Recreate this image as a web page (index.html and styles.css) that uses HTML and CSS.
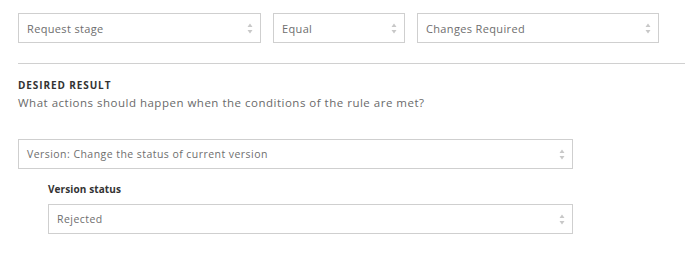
FILE: index.html
```html
<!DOCTYPE html>
<html>
<head>
<meta charset="utf-8">
<link rel="stylesheet" href="styles.css">
</head>
<body>
<div class="page">
  <div class="cond-row">
    <div class="select w1"><span>Request stage</span><svg class="arrows" viewBox="0 0 6 11"><path d="M3 0.5 L5.5 4 L0.5 4 Z M3 10.5 L5.5 7 L0.5 7 Z"/></svg></div>
    <div class="select w2"><span>Equal</span><svg class="arrows" viewBox="0 0 6 11"><path d="M3 0.5 L5.5 4 L0.5 4 Z M3 10.5 L5.5 7 L0.5 7 Z"/></svg></div>
    <div class="select w3"><span>Changes Required</span><svg class="arrows" viewBox="0 0 6 11"><path d="M3 0.5 L5.5 4 L0.5 4 Z M3 10.5 L5.5 7 L0.5 7 Z"/></svg></div>
  </div>
  <hr class="divider">
  <div class="section">
    <h3 class="section-title">DESIRED RESULT</h3>
    <p class="section-desc">What actions should happen when the conditions of the rule are met?</p>
    <div class="select small w-action"><span>Version: Change the status of current version</span><svg class="arrows" viewBox="0 0 6 11"><path d="M3 0.5 L5.5 4 L0.5 4 Z M3 10.5 L5.5 7 L0.5 7 Z"/></svg></div>
    <div class="sub">
      <label class="sub-label">Version status</label>
      <div class="select small w-status"><span>Rejected</span><svg class="arrows" viewBox="0 0 6 11"><path d="M3 0.5 L5.5 4 L0.5 4 Z M3 10.5 L5.5 7 L0.5 7 Z"/></svg></div>
    </div>
  </div>
</div>
</body>
</html>
```

FILE: styles.css
```css
html, body {
  margin: 0;
  padding: 0;
  background: #fff;
}
body {
  font-family: "Open Sans", "Liberation Sans", sans-serif;
  color: #6b6b6b;
}
.page {
  padding: 13px 0 0 18px;
}
.cond-row {
  display: flex;
  gap: 12px;
}
.select {
  box-sizing: border-box;
  height: 30px;
  border: 1px solid #cfcfcf;
  display: flex;
  align-items: center;
  justify-content: space-between;
  padding: 0 7px 0 8px;
  font-size: 11px;
  letter-spacing: 0.35px;
  color: #6e6e6e;
  background: #fff;
}
.select.small {
  font-size: 10.5px;
  letter-spacing: 0.45px;
}
.arrows {
  width: 6px;
  height: 11px;
  fill: #c8c8c8;
}
.w1 { width: 243px; }
.w2 { width: 132px; }
.w3 { width: 242px; }
.w-action { width: 555px; height: 30px; }
.w-status { width: 525px; }
.divider {
  border: 0;
  border-top: 1px solid #d0d0d0;
  margin: 20px 0 0 0;
  height: 0;
}
.section-title {
  margin: 15px 0 0 0;
  font-size: 10px;
  font-weight: 700;
  color: #333;
  line-height: 12px;
  letter-spacing: 0.9px;
}
.section-desc {
  margin: 5px 0 0 0;
  font-size: 11.5px;
  line-height: 14px;
  letter-spacing: 0.5px;
  color: #6a6a6a;
}
.w-action {
  margin-top: 29px;
}
.sub {
  padding-left: 30px;
  margin-top: 14px;
}
.sub-label {
  display: block;
  font-size: 10px;
  font-weight: 700;
  color: #333;
  line-height: 13px;
  letter-spacing: 0.1px;
  margin-bottom: 8px;
}
```
